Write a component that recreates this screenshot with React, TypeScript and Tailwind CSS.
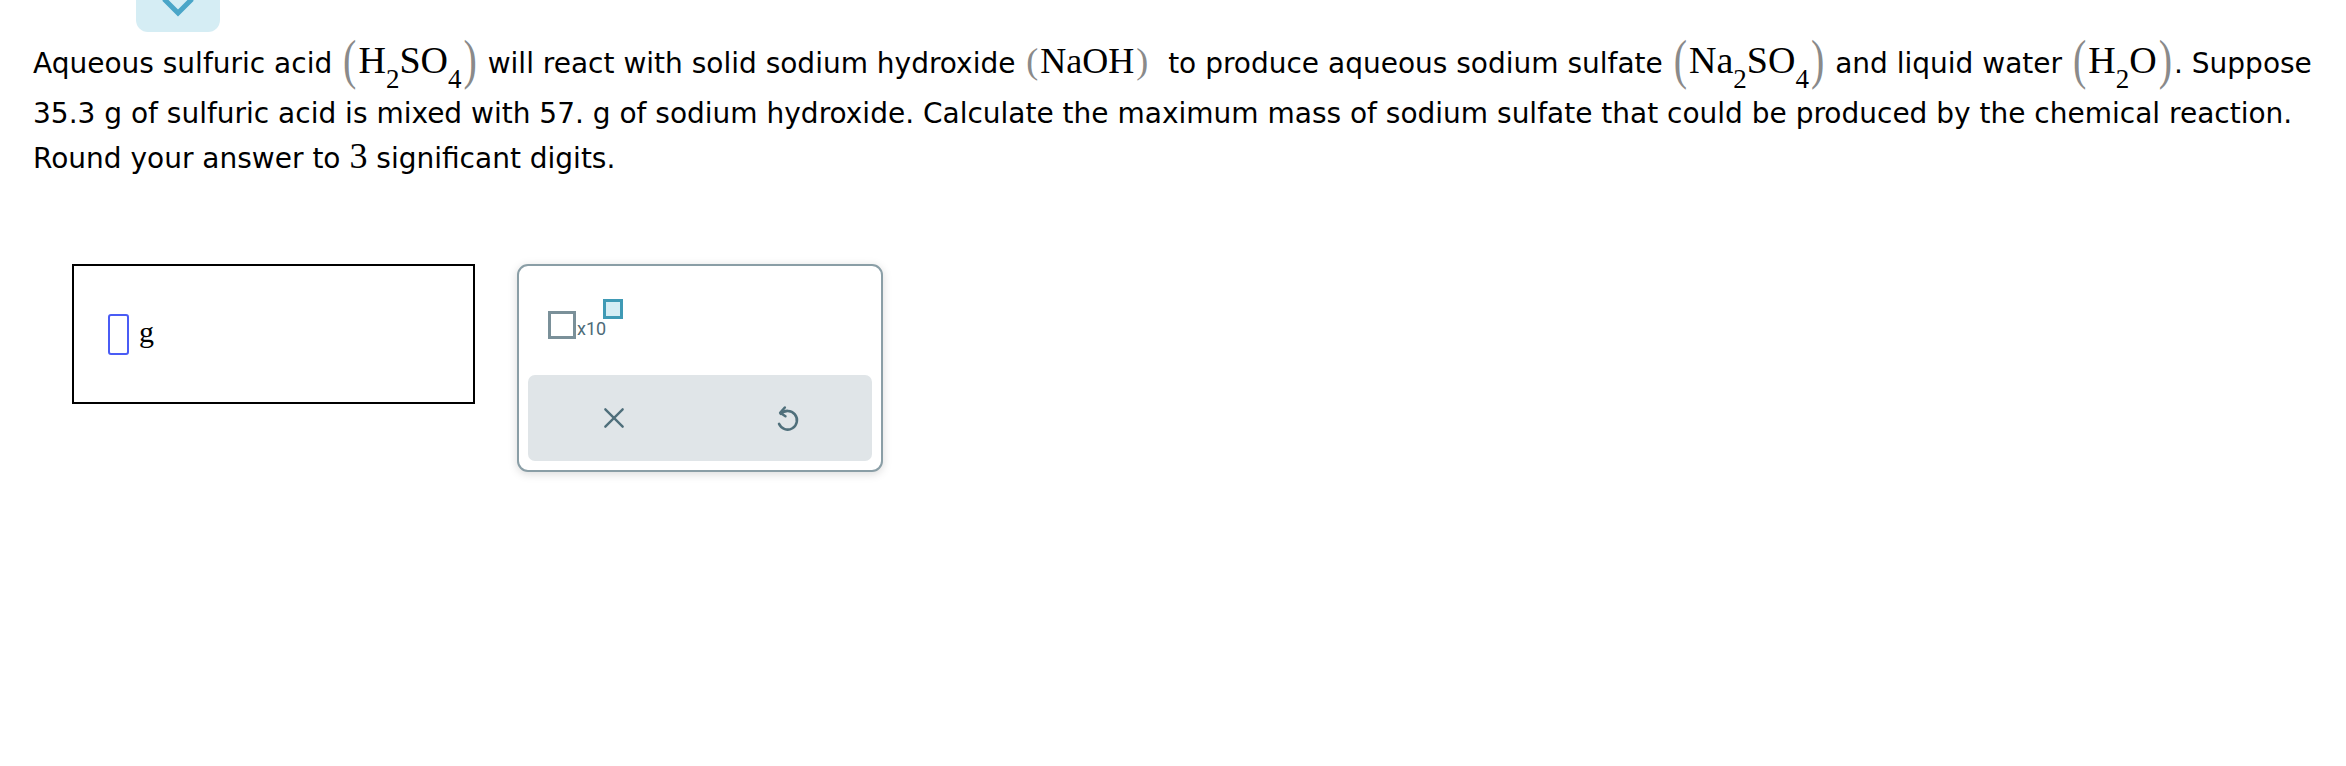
import React from "react";

const serif = "font-['Liberation_Serif',serif]";

function Paren({ c, tall }: { c: string; tall?: boolean }) {
  return (
    <span
      className={`${serif} inline-block leading-none text-[#8a8a8a] ${
        tall ? "text-[40px] scale-y-[1.35]" : "text-[36px]"
      } mx-[2px]`}
    >
      {c}
    </span>
  );
}

function Sub({ children }: { children: React.ReactNode }) {
  return <sub className="text-[27px] leading-none align-[-8px]">{children}</sub>;
}

function Formula({ children }: { children: React.ReactNode }) {
  return (
    <span className="whitespace-nowrap">
      <Paren c="(" tall />
      <span className={`${serif} text-[38px] leading-none`}>{children}</span>
      <Paren c=")" tall />
    </span>
  );
}

export default function App() {
  return (
    <div className="w-full h-[766px] bg-white text-black font-['DejaVu_Sans',sans-serif]">
      <div className="ml-[136px] w-[84px] h-[32px] rounded-b-[12px] bg-[#d5edf4] flex justify-center overflow-hidden">
        <svg width="36" height="20" viewBox="0 0 36 20" className="-mt-[3px]">
          <path d="M4 2 L18 16 L32 2" fill="none" stroke="#4aa6c8" strokeWidth="5" strokeLinejoin="miter" />
        </svg>
      </div>

      <div className="pl-[33px] text-[28px] leading-[45px]">
        <div className="h-[59px] pt-[8px] whitespace-nowrap">
          Aqueous sulfuric acid{" "}
          <Formula>
            H<Sub>2</Sub>SO<Sub>4</Sub>
          </Formula>{" "}
          will react with solid sodium hydroxide{" "}
          <span className="whitespace-nowrap">
            <Paren c="(" />
            <span className={`${serif} text-[36px] leading-none`}>NaOH</span>
            <Paren c=")" />
          </span>
          {"\u00a0 "}to produce aqueous sodium sulfate{" "}
          <Formula>
            Na<Sub>2</Sub>SO<Sub>4</Sub>
          </Formula>{" "}
          and liquid water{" "}
          <Formula>
            H<Sub>2</Sub>O
          </Formula>
          . Suppose
        </div>
        <div className="whitespace-nowrap">
          35.3 g of sulfuric acid is mixed with 57. g of sodium hydroxide. Calculate the maximum mass of sodium sulfate
          that could be produced by the chemical reaction.
        </div>
        <div className="h-[45px] whitespace-nowrap">
          Round your answer to <span className={`${serif} text-[36px] leading-none`}>3</span> significant digits.
        </div>
      </div>

      <div className="flex items-start mt-[83px] pl-[72px] gap-[42px]">
        <div className="w-[403px] h-[140px] border-2 border-black flex items-center pl-[34px] gap-[10px]">
          <div className="w-[21px] h-[41px] border-2 border-[#4a5cf5] rounded-[3px]" />
          <span className={`${serif} text-[30px] leading-none -mt-[4px]`}>g</span>
        </div>

        <div className="w-[366px] h-[208px] border-2 border-[#8a9ea6] rounded-[11px] bg-white shadow-[0_2px_10px_rgba(0,0,0,0.15)] p-[9px] flex flex-col">
          <div className="h-[100px] flex items-start pl-[20px] pt-[24px]">
            <div className="flex items-end">
              <div className="mt-[12px] w-[28px] h-[28px] border-[3px] border-[#7a9099]" />
              <span className="font-['Roboto',sans-serif] text-[18px] leading-none text-[#4d6b78] mb-[1px] ml-[1px]">x10</span>
              <div className="self-start w-[20px] h-[20px] border-[3px] border-[#3f9ab5] bg-[#d5edf4] -ml-[3px]" />
            </div>
          </div>
          <div className="flex-1 bg-[#e0e5e8] rounded-[7px] grid grid-cols-2 items-center">
            <div className="flex justify-center">
              <svg width="26" height="26" viewBox="0 0 24 24" fill="none" stroke="#4f6f7b" strokeWidth="2.2" strokeLinecap="round">
                <path d="M4 4 L20 20 M20 4 L4 20" />
              </svg>
            </div>
            <div className="flex justify-center">
              <svg width="28" height="30" viewBox="0 0 24 24" fill="none" stroke="#4f6f7b" strokeWidth="2.2" strokeLinecap="round" strokeLinejoin="round">
                <path d="M7.5 8.5 A8 8 0 1 1 6 17" />
                <path d="M11 3 L7 7.5 L11.5 10.5" />
              </svg>
            </div>
          </div>
        </div>
      </div>
    </div>
  );
}
